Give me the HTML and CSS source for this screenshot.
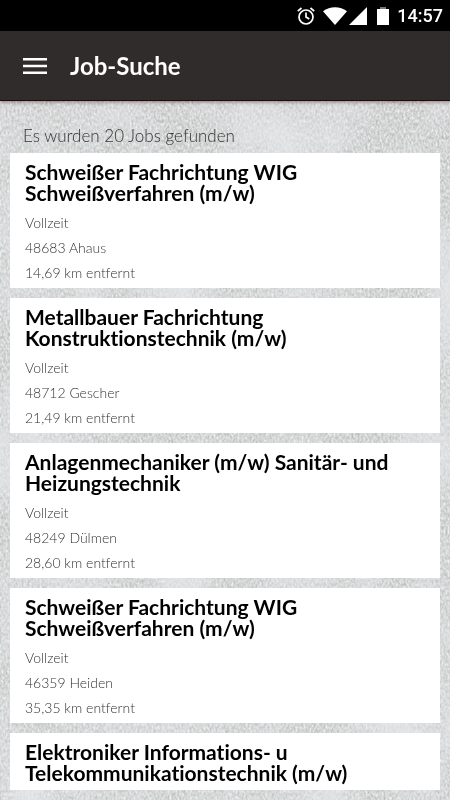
FILE: index.html
```html
<!DOCTYPE html>
<html lang="de">
<head>
<meta charset="utf-8">
<meta name="viewport" content="width=device-width, initial-scale=1">
<title>Job-Suche</title>
<link rel="stylesheet" href="styles.css">
</head>
<body>
<svg class="texture" aria-hidden="true">
  <filter id="grain" x="0" y="0" width="100%" height="100%" color-interpolation-filters="sRGB">
    <feTurbulence type="fractalNoise" baseFrequency="0.5 0.3" numOctaves="3" seed="8"/>
    <feColorMatrix values="0.3 0.12 0 0 0.62  0.3 0.12 0 0 0.625  0.3 0.12 0 0 0.625  0 0 0 0 1"/>
  </filter>
  <filter id="clouds" x="0" y="0" width="100%" height="100%" color-interpolation-filters="sRGB">
    <feTurbulence type="fractalNoise" baseFrequency="0.014 0.01" numOctaves="4" seed="21"/>
    <feColorMatrix values="0 0 0 0 0.9  0 0 0 0 0.91  0 0 0 0 0.92  1.8 0 0 0 -0.65"/>
  </filter>
  <rect width="100%" height="100%" filter="url(#grain)"/>
  <rect width="100%" height="100%" filter="url(#clouds)"/>
</svg>
<div class="app">
  <div class="status">
    <svg width="20" height="20" viewBox="0 0 20 20" fill="none" stroke="#fff" stroke-width="1.7"><circle cx="10" cy="11" r="7"/><path d="M10 6.5V11l3.3 2M1.8 5.2 5.5 2M18.2 5.2 14.5 2"/></svg>
    <svg class="wifi" width="24" height="18" viewBox="0 0 24 18" fill="#fff"><path d="M0 4.2C7 -1 17 -1 24 4.2L12 18Z"/></svg>
    <svg class="signal" width="18" height="18" viewBox="0 0 18 18" fill="#fff"><path d="M18 0V18H0Z"/></svg>
    <svg class="battery" width="12" height="18" viewBox="0 0 12 18"><path fill="#777" d="M3 0h6v3H3z"/><path fill="#fff" d="M0 2h12v16H0z"/></svg>
    <span class="clock">14:57</span>
  </div>
  <header class="bar">
    <button class="menu" type="button" aria-label="Menü">
      <svg width="24" height="16" viewBox="0 0 24 16" fill="#fff"><path d="M0 0h24v2.6H0zM0 6.7h24v2.6H0zM0 13.4h24V16H0z"/></svg>
    </button>
    <h1>Job-Suche</h1>
  </header>
  <main class="results">
    <p class="count">Es wurden 20 Jobs gefunden</p>
    <ul class="jobs">
      <li class="job"><h2>Schweißer Fachrichtung WIG Schweißverfahren (m/w)</h2><p>Vollzeit</p><p>48683 Ahaus</p><p>14,69 km entfernt</p></li>
      <li class="job"><h2>Metallbauer Fachrichtung Konstruktionstechnik (m/w)</h2><p>Vollzeit</p><p>48712 Gescher</p><p>21,49 km entfernt</p></li>
      <li class="job"><h2>Anlagenmechaniker (m/w) Sanitär- und Heizungstechnik</h2><p>Vollzeit</p><p>48249 Dülmen</p><p>28,60 km entfernt</p></li>
      <li class="job"><h2>Schweißer Fachrichtung WIG Schweißverfahren (m/w)</h2><p>Vollzeit</p><p>46359 Heiden</p><p>35,35 km entfernt</p></li>
      <li class="job"><h2>Elektroniker Informations- u Telekommunikationstechnik (m/w)</h2></li>
    </ul>
  </main>
</div>
</body>
</html>
```
FILE: styles.css
```css
* { box-sizing: border-box; margin: 0; padding: 0; }
body {
  background: #d5d7d7;
  font-family: "Lato", "Liberation Sans", sans-serif;
  font-variant-ligatures: none;
  overflow: hidden;
}
.texture { position: fixed; inset: 0; width: 100%; height: 100%; z-index: -1; }
.app { display: flex; flex-direction: column; height: 100vh; }
.status {
  display: flex;
  flex: none;
  align-items: center;
  justify-content: flex-end;
  height: 31px;
  padding-right: 7px;
  background: #000;
  color: #fff;
}
.status svg { flex: none; }
.wifi { margin-left: 7px; }
.signal { margin-left: 2px; }
.battery { margin-left: 10px; }
.clock { margin-left: 8px; font: 500 18px/30px Roboto, sans-serif; }
.bar {
  display: flex;
  flex: none;
  align-items: center;
  height: 70px;
  padding: 0 23px;
  gap: 23px;
  background: #302c2b;
  border-bottom: 1px solid #1d0c0d;
  box-shadow: 0 1px 4px rgba(50, 20, 25, .5);
  color: #fff;
}
.bar h1 { font-size: 24px; font-weight: 700; line-height: 30px; }
.menu { display: flex; border: 0; background: none; cursor: pointer; }
.results { flex: 1; min-height: 0; margin: 0 10px 10px; padding-top: 22px; overflow: hidden; }
.count { padding: 0 13px; font-size: 17px; line-height: 26px; color: #333; margin-bottom: 4px; font-weight: 300; }
.jobs { display: flex; flex-direction: column; gap: 10px; list-style: none; }
.job { padding: 8px 15px 3px; background: #fff; color: #333; font-size: 14px; line-height: 25px; font-weight: 300; }
.job h2 { margin-bottom: 7px; color: #000; font-size: 21px; font-weight: 700; line-height: 21px; }
```
